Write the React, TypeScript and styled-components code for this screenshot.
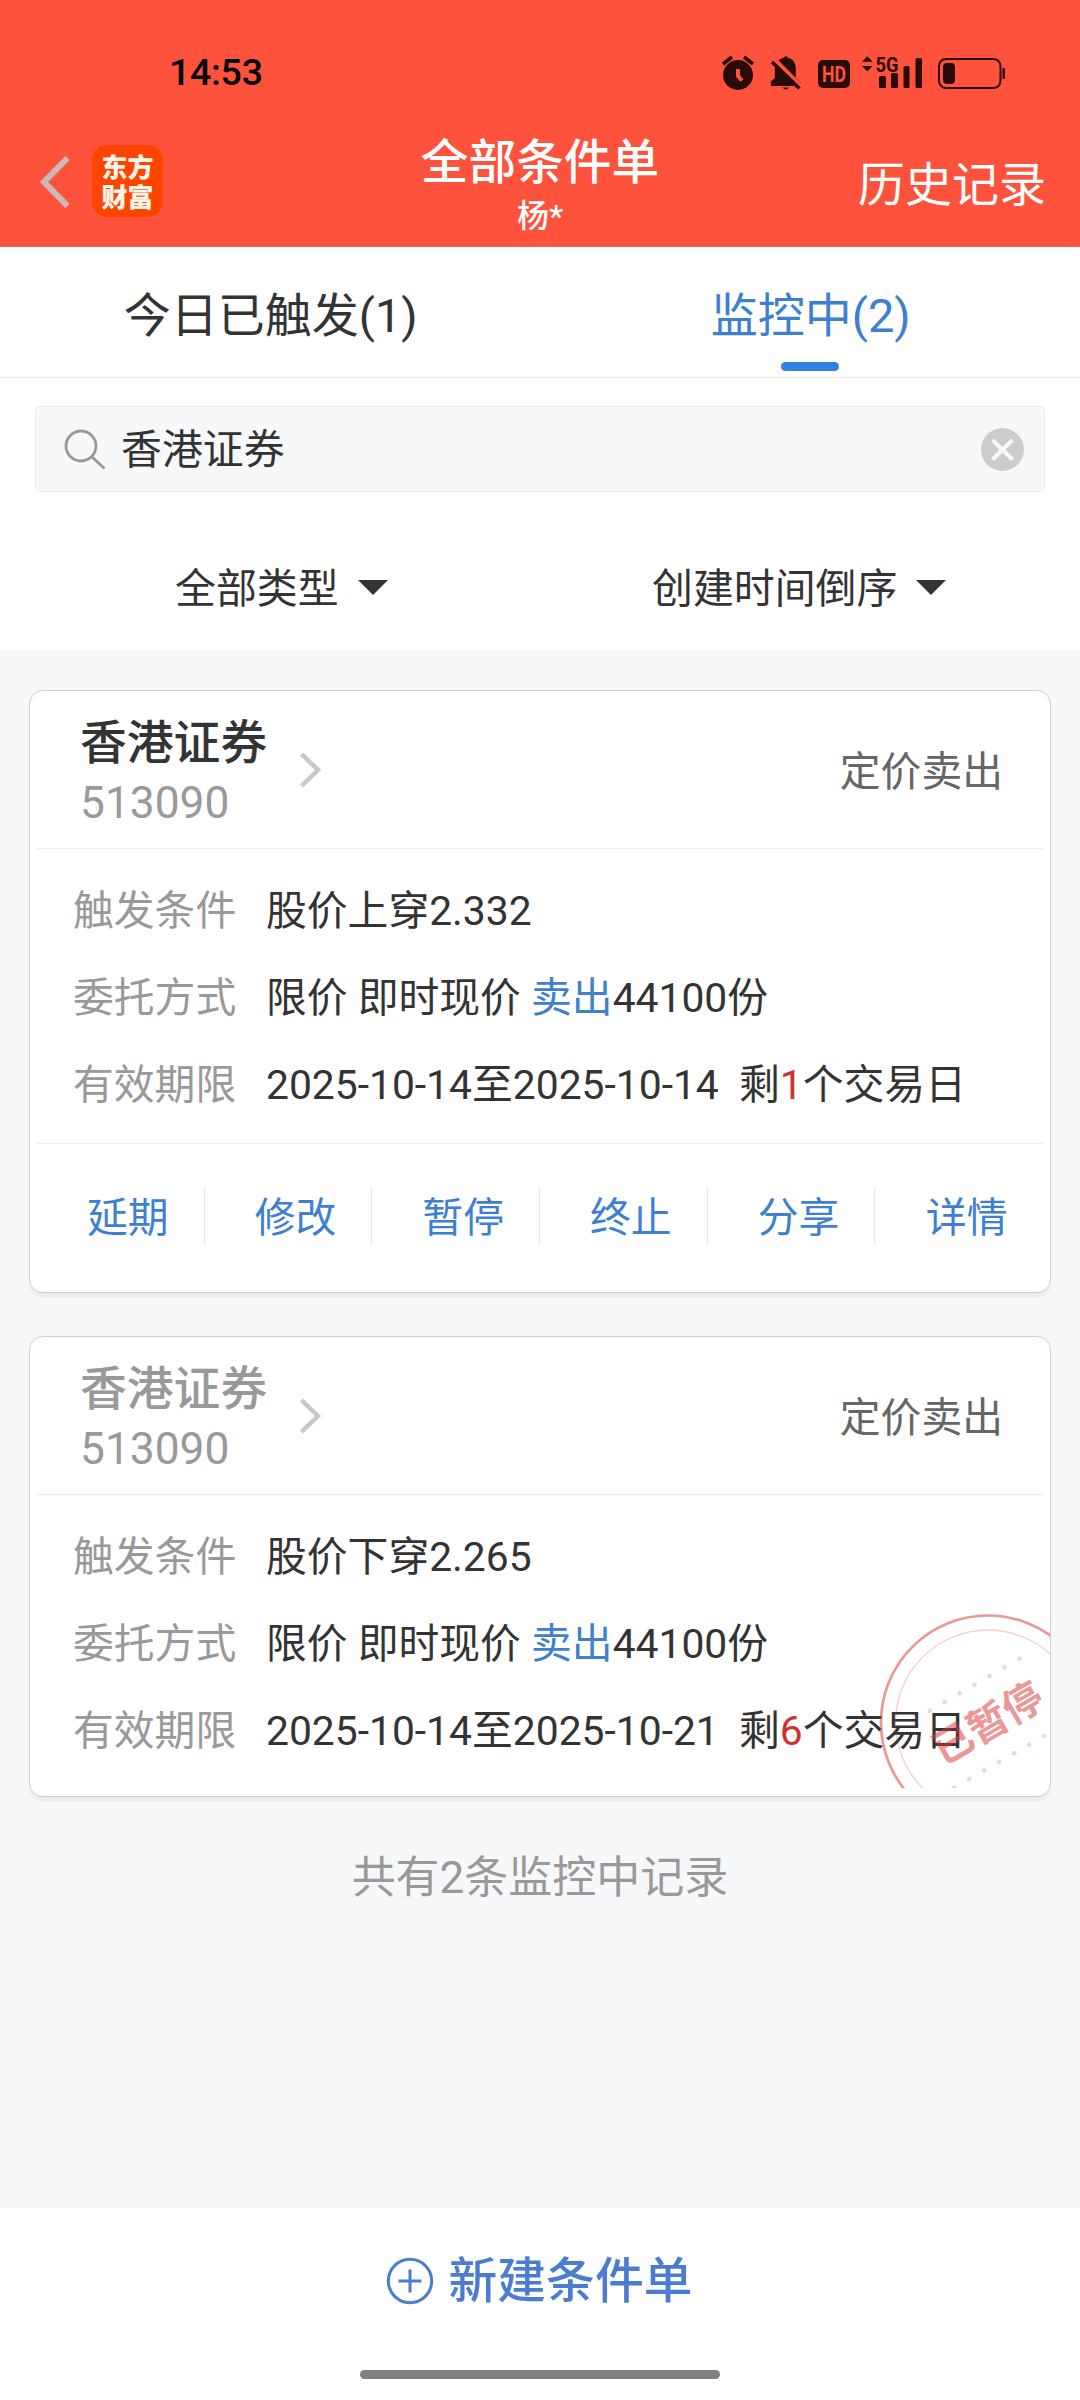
import React from "react";
import styled, { createGlobalStyle } from "styled-components";

const Global = createGlobalStyle`
  * { box-sizing: border-box; }
  body { margin: 0; background: #f7f8fa; }
  button { font: inherit; color: inherit; background: none; border: 0; padding: 0; margin: 0; }
`;

const Page = styled.div`
  width: 1080px;
  height: 2400px;
  display: flex;
  flex-direction: column;
  background: #f7f8fa;
  color: #333;
  font-family: Roboto, "Noto Sans CJK SC", sans-serif;
  font-size: 41px;
  line-height: 1;
  white-space: nowrap;
  overflow: hidden;
`;

const Top = styled.header`
  height: 247px;
  flex: none;
  background: #ff523c;
  border-bottom: 1px solid #d9705c;
`;

const StatusBar = styled.div`
  height: 113px;
  padding: 33px 73px 0 169px;
  display: flex;
  justify-content: space-between;
  align-items: center;
  color: #000;
`;

const Clock = styled.span`
  font-size: 37.5px;
  font-weight: 500;
  letter-spacing: -0.3px;
`;

const NavBar = styled.div`
  height: 133px;
  display: grid;
  grid-template-columns: 360px 360px 1fr;
  padding-top: 16px;
`;

const NavLeft = styled.div`
  display: flex;
  align-items: flex-start;
  padding: 16px 0 0 40px;
  gap: 23px;
`;

const BackIcon = styled.svg`
  margin-top: 10px;
`;

const Logo = styled.div`
  width: 71px;
  height: 72px;
  border-radius: 15px;
  background: #ff4400;
  color: #fff6ea;
  display: flex;
  flex-direction: column;
  justify-content: center;
  align-items: center;
  font-size: 26px;
  line-height: 30px;
  font-weight: 900;
  font-family: "Noto Sans CJK SC", sans-serif;
`;

const NavTitle = styled.div`
  display: flex;
  flex-direction: column;
  align-items: center;
  padding-top: 3px;
  color: #fff;
`;

const Title = styled.h1`
  margin: 0;
  font-size: 47.7px;
  line-height: 62px;
  font-weight: 500;
`;

const SubTitle = styled.div`
  font-size: 32px;
  line-height: 44px;
  font-weight: 500;
`;

const History = styled.button`
  justify-self: end;
  align-self: start;
  margin: 25px 34px 0 0;
  color: #fff;
  font-size: 47px;
  line-height: 62px;
`;

const Tabs = styled.nav`
  height: 131px;
  flex: none;
  display: grid;
  grid-template-columns: 1fr 1fr;
  background: #fff;
  border-bottom: 1px solid #ececec;
`;

const Tab = styled.button<{ $active?: boolean }>`
  display: flex;
  flex-direction: column;
  align-items: center;
  padding-top: 39px;
  font-size: 47px;
  line-height: 60px;
  color: ${(p) => (p.$active ? "#3d7fd0" : "#333")};
  &::after {
    content: "";
    width: 58px;
    height: 9px;
    margin-top: 16px;
    border-radius: 5px;
    background: ${(p) => (p.$active ? "#3380e0" : "transparent")};
  }
`;

const TabText = styled.span`
  padding-left: 1.5px;
`;

const Filters = styled.section`
  height: 272px;
  flex: none;
  background: #fff;
  padding: 28px 35px 0;
`;

const Search = styled.div`
  height: 86px;
  border: 1px solid #ebecee;
  border-radius: 5px;
  background: #f7f8fa;
  display: flex;
  align-items: center;
  padding: 0 20px 0 28px;
`;

const Query = styled.span`
  flex: 1;
  margin-left: 15px;
  padding-top: 3px;
  font-size: 40.9px;
`;

const Selects = styled.div`
  height: 158px;
  margin: 0 -35px;
  padding-top: 32px;
  display: grid;
  grid-template-columns: 1fr 1fr;
`;

const Select = styled.button<{ $shift: number }>`
  display: flex;
  align-items: center;
  height: 130px;
  padding-left: ${(p) => p.$shift}px;
  gap: 19px;
  font-size: 40.9px;
  svg { margin-bottom: 3px; }
`;

const List = styled.main`
  flex: 1;
  padding: 40px 29px 0;
  display: flex;
  flex-direction: column;
  gap: 43px;
`;

const Card = styled.article<{ $paused?: boolean }>`
  position: relative;
  border: 1px solid #cfcfcf;
  border-radius: 14px;
  background: #fff;
  box-shadow: 0 4px 2px rgba(0, 0, 0, 0.05);
  padding: 0 7px ${(p) => (p.$paused ? 7 : 0)}px;
`;

const CardHead = styled.div`
  height: 158px;
  border-bottom: 1px solid #ececec;
  display: flex;
  align-items: center;
  padding: 4px 40px 0 43px;
`;

const Stock = styled.div`
  width: 220px;
  padding-top: 3px;
`;

const StockName = styled.div<{ $muted?: boolean }>`
  font-size: 46.8px;
  line-height: 60px;
  font-weight: 500;
  color: ${(p) => (p.$muted ? "#999" : "#333")};
`;

const StockCode = styled.div`
  font-size: 44.3px;
  line-height: 60px;
  color: #999;
`;

const Arrow = styled.svg`
  margin-bottom: 4px;
`;

const Kind = styled.div`
  margin-left: auto;
  padding-top: 2px;
  color: #666;
  font-size: 40.8px;
`;

const Rows = styled.dl`
  margin: 0;
  padding: 19px 0 14px 36px;
`;

const Row = styled.div`
  display: flex;
  height: 87px;
  align-items: center;
  font-size: 40.8px;
`;

const Label = styled.dt`
  width: 193px;
  color: #999;
`;

const Value = styled.dd`
  margin: 0;
  white-space: pre;
`;

const Mark = styled.span<{ $tone: "blue" | "red" }>`
  color: ${(p) => (p.$tone === "blue" ? "#3d7fd0" : "#d0302f")};
`;

const Actions = styled.div`
  height: 149px;
  border-top: 1px solid #ececec;
  display: grid;
  grid-template-columns: repeat(6, 1fr);
  padding-top: 43px;
`;

const Action = styled.button`
  height: 58px;
  padding-left: 15px;
  border-right: 1px solid #e6e6e6;
  color: #3d7fd0;
  font-size: 40.8px;
  line-height: 62px;
  &:last-child { border-right: 0; }
`;

const Stamp = styled.svg`
  position: absolute;
  right: 0;
  bottom: 8px;
`;

const Total = styled.p`
  margin: 8px 0 0;
  text-align: center;
  color: #999;
  font-size: 44px;
  line-height: 60px;
`;

const Bottom = styled.footer`
  height: 192px;
  flex: none;
  background: #fff;
  display: flex;
  flex-direction: column;
  align-items: center;
`;

const Create = styled.button`
  height: 146px;
  padding-right: 2px;
  display: flex;
  align-items: center;
  gap: 15px;
  color: #4a7dd2;
  font-size: 48.8px;
  font-weight: 500;
  span { padding-top: 3px; }
  svg { margin-top: -1px; }
`;

const HomeBar = styled.div`
  width: 360px;
  height: 9px;
  margin-top: 16px;
  border-radius: 5px;
  background: #808080;
`;

const ink = "#2a0a06";

const StatusIcons = () => (
  <svg width="285" height="48" viewBox="722 48 285 48" fill={ink}>
    <circle cx="738" cy="74" r="15" />
    <path d="M723 63l9-7M753 63l-9-7" stroke={ink} strokeWidth="3.6" />
    <path d="M738 68v7l4 4.500" stroke="#ff523c" strokeWidth="4" fill="none" />
    <path d="M784 56.500q1.900-2.500 3.800 0q8 2.500 8 10.500v10l5 4.500v3.500h-30v-4.500l4-3.500v-9q0-8.500 9.200-11.500z" />
    <path d="M782.500 86.500h6.500q-3.200 4-6.500 0z" />
    <path d="M774.500 58.500l28 28" stroke="#ff523c" strokeWidth="4.500" />
    <path d="M772 61l27.500 26.500" stroke={ink} strokeWidth="3.600" />
    <rect x="818" y="59" width="32" height="28" rx="5" />
    <text x="834" y="81" fontSize="22" fontWeight="700" textAnchor="middle" textLength="24" lengthAdjust="spacingAndGlyphs" fill="#ff523c">HD</text>
    <path d="M862 60.700l5.300-5.500 5.300 5.500zM862 65l5.300 5.500 5.300-5.500z" />
    <text x="875.500" y="70.500" fontSize="21" fontWeight="700" textLength="23" lengthAdjust="spacingAndGlyphs">5G</text>
    <rect x="879" y="75" width="7" height="12" rx="1.500" />
    <rect x="891" y="72" width="7" height="15" rx="1.500" />
    <rect x="903.500" y="65" width="6" height="22" rx="1.500" />
    <rect x="915.500" y="57" width="6.500" height="30" rx="1.500" />
    <rect x="939" y="58" width="61.500" height="29" rx="7" fill="none" stroke={ink} strokeWidth="2" />
    <rect x="943" y="62" width="12" height="21" rx="4" />
    <rect x="1002.500" y="67" width="2.500" height="11" rx="1" />
  </svg>
);

const Caret = () => (
  <svg width="30" height="15" viewBox="0 0 30 15"><path d="M0 0h30L15 15z" fill="#333" /></svg>
);

const PausedStamp = () => (
  <Stamp width="174" height="176" viewBox="876 1612 174 176">
    <g fill="none" stroke="#d9373a">
      <circle cx="988" cy="1722.500" r="107" strokeWidth="2.700" opacity="0.52" />
      <circle cx="988" cy="1722.500" r="92.500" strokeWidth="1.300" opacity="0.25" />
    </g>
    <g fill="#d9373a" opacity="0.22">
      {[0, 1, 2, 3, 4, 5, 6].map((i) => (
        <React.Fragment key={i}>
          <circle cx={929.7 + i * 14.95} cy={1710.7 - i * 8.67} r="2.300" />
          <circle cx={954.3 + i * 14.95} cy={1787.6 - i * 8.6} r="2.300" />
        </React.Fragment>
      ))}
    </g>
    <text transform="translate(987.500 1722.500) rotate(-30)" y="15" textAnchor="middle" fontSize="40" fontWeight="700" fill="#d9373a" opacity="0.52">已暂停</text>
  </Stamp>
);

type Order = { price: string; end: string; left: number; paused?: boolean };

const orders: Order[] = [
  { price: "股价上穿2.332", end: "2025-10-14", left: 1 },
  { price: "股价下穿2.265", end: "2025-10-21", left: 6, paused: true },
];

const actions = ["延期", "修改", "暂停", "终止", "分享", "详情"];

const OrderCard = ({ price, end, left, paused }: Order) => (
  <Card $paused={paused}>
    <CardHead>
      <Stock>
        <StockName $muted={paused}>香港证券</StockName>
        <StockCode>513090</StockCode>
      </Stock>
      <Arrow width="22" height="36" viewBox="0 0 22 36"><path d="M1.500 2l16.500 16L1.500 34" fill="none" stroke="#c8c8c8" strokeWidth="4.500" /></Arrow>
      <Kind>定价卖出</Kind>
    </CardHead>
    <Rows>
      <Row><Label>触发条件</Label><Value>{price}</Value></Row>
      <Row><Label>委托方式</Label><Value>限价 即时现价 <Mark $tone="blue">卖出</Mark>44100份</Value></Row>
      <Row><Label>有效期限</Label><Value>2025-10-14至{end}{"  "}剩<Mark $tone="red">{left}</Mark>个交易日</Value></Row>
    </Rows>
    {paused ? <PausedStamp /> : (
      <Actions>{actions.map((a) => <Action key={a}>{a}</Action>)}</Actions>
    )}
  </Card>
);

export default function App() {
  return (
    <Page>
      <Global />
      <Top>
        <StatusBar><Clock>14:53</Clock><StatusIcons /></StatusBar>
        <NavBar>
          <NavLeft>
            <BackIcon width="29" height="54" viewBox="0 0 29 54"><path d="M27.500 3L4 27l23.500 24" fill="none" stroke="#c9b9b9" strokeWidth="6" /></BackIcon>
            <Logo><span>东方</span><span>财富</span></Logo>
          </NavLeft>
          <NavTitle><Title>全部条件单</Title><SubTitle>杨*</SubTitle></NavTitle>
          <History>历史记录</History>
        </NavBar>
      </Top>
      <Tabs>
        <Tab><TabText>今日已触发(1)</TabText></Tab>
        <Tab $active><TabText>监控中(2)</TabText></Tab>
      </Tabs>
      <Filters>
        <Search>
          <svg width="42" height="40" viewBox="0 0 42 40" fill="none" stroke="#999" strokeWidth="2.800"><circle cx="17" cy="17" r="15" /><path d="M27.500 27.500l13 12" /></svg>
          <Query>香港证券</Query>
          <svg width="43" height="43" viewBox="0 0 43 43"><circle cx="21.500" cy="21.500" r="21.500" fill="#ccc" /><path d="M11.500 12l20 19.500M31.500 12l-20 19.500" stroke="#f7f8fa" strokeWidth="4" /></svg>
        </Search>
        <Selects>
          <Select $shift={175}>全部类型<Caret /></Select>
          <Select $shift={112}>创建时间倒序<Caret /></Select>
        </Selects>
      </Filters>
      <List>
        {orders.map((o) => <OrderCard key={o.end} {...o} />)}
        <Total>共有2条监控中记录</Total>
      </List>
      <Bottom>
        <Create>
          <svg width="48" height="48" viewBox="0 0 48 48" fill="none" stroke="#4a7dd2" strokeWidth="3"><circle cx="24" cy="24" r="21.700" /><path d="M12.500 24h23M24 12.500v23" /></svg>
          <span>新建条件单</span>
        </Create>
        <HomeBar />
      </Bottom>
    </Page>
  );
}
